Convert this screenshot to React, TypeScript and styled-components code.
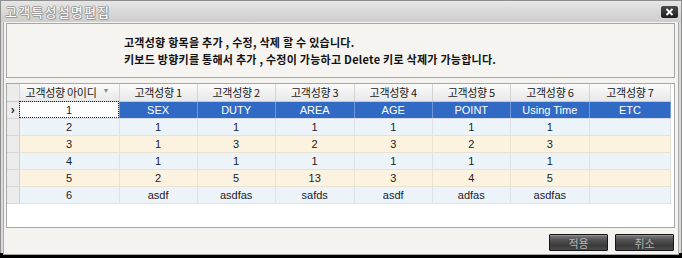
import React from "react";
import styled, { createGlobalStyle } from "styled-components";

const Global = createGlobalStyle`
  html, body { margin: 0; padding: 0; background: #000; }
  body { width: 682px; height: 258px; overflow: hidden; }
  * { box-sizing: border-box; }
`;

const KR = `"Noto Sans CJK KR", "Noto Sans", sans-serif`;
const LAT = `"Liberation Sans", "Noto Sans CJK KR", sans-serif`;

const Window = styled.div`
  width: 682px;
  height: 253px;
  display: flex;
  flex-direction: column;
  background: #d9d9d9;
  border: 1px solid #8e8e8e;
  border-bottom: none;
`;

const TitleBar = styled.div`
  height: 21px;
  flex: none;
  display: flex;
  align-items: center;
  justify-content: space-between;
  padding: 0 2px 0 4px;
  background: linear-gradient(#e6e6e6, #d6d6d6 60%, #cecece);
`;

const Title = styled.span`
  font-family: ${KR};
  font-size: 13px;
  font-weight: 400;
  color: #ffffff;
  letter-spacing: 1.2px;
  text-shadow: 1px 0 #9a9a9a, -1px 0 #9a9a9a, 0 1px #9a9a9a, 0 -1px #9a9a9a, 1px 1px #a8a8a8;
`;

const CloseButton = styled.div`
  width: 17px;
  height: 12px;
  border-radius: 2px;
  background: linear-gradient(#4a4a4a, #1e1e1e);
  display: flex;
  align-items: center;
  justify-content: center;
  margin-right: 1px;
`;

const Body = styled.div`
  flex: 1;
  margin: 0 2px;
  border-left: 1px solid #a9a9a9;
  border-right: 1px solid #a9a9a9;
  border-bottom: 1px solid #a9a9a9;
  background: #f4f3ef;
  padding: 1px 3px 3px 2px;
  display: flex;
  flex-direction: column;
`;

const InfoPanel = styled.div`
  height: 55px;
  flex: none;
  border: 1px solid #a6a6a6;
  background: #f5f4f1;
  padding: 10px 0 0 117px;
  display: flex;
  flex-direction: column;
`;

const InfoLine = styled.div`
  font-family: ${KR};
  font-size: 11px;
  font-weight: 700;
  color: #111;
  line-height: 17px;
  white-space: nowrap;
  letter-spacing: 0.25px;
`;

const GridPanel = styled.div`
  margin-top: 5px;
  height: 145px;
  flex: none;
  border: 1px solid #a6a6a6;
  background: #ffffff;
`;

const Table = styled.table`
  border-collapse: collapse;
  table-layout: fixed;
  width: 664px;
`;

const Col = styled.col<{ $w: number }>`
  width: ${(p) => p.$w}px;
`;

const HeadCell = styled.th<{ $corner?: boolean; $sort?: boolean }>`
  height: 17px;
  padding: 0 ${(p) => (p.$sort ? "16px" : "0")} 0 0;
  font-family: ${KR};
  font-size: 11px;
  font-weight: 400;
  letter-spacing: -0.3px;
  color: #1a1a1a;
  text-align: center;
  background: ${(p) => (p.$corner ? "#ececec" : "linear-gradient(#fbfbfb, #f0f0f0 55%, #e8e8e8)")};
  border-right: 1px solid #d4d4d4;
  border-bottom: 1px solid #c9c9c9;
  white-space: nowrap;
  position: relative;
`;

const SortGlyph = styled.span`
  position: absolute;
  left: 83px;
  top: 3px;
  font-size: 7px;
  color: #8a8a8a;
  font-family: ${LAT};
`;

const RowHead = styled.td`
  height: 17px;
  padding: 0;
  background: #ececec;
  border-right: 1px solid #d0d0d0;
  border-bottom: 1px solid #d6d6d6;
  text-align: center;
  font-family: ${LAT};
  font-size: 12px;
  font-weight: 700;
  color: #333;
  line-height: 14px;
`;

type Tone = "sel" | "blue" | "cream";

const bg: Record<Tone, string> = { sel: "#316ac5", blue: "#ecf4fa", cream: "#fbf2e0" };
const line: Record<Tone, string> = { sel: "#6f96d6", blue: "#dfe3e6", cream: "#e9e2d3" };

const Cell = styled.td<{ $tone: Tone; $focus?: boolean }>`
  height: 17px;
  padding: 0;
  text-align: center;
  font-family: ${LAT};
  font-size: 11px;
  line-height: 14px;
  white-space: nowrap;
  overflow: hidden;
  color: ${(p) => (p.$tone === "sel" && !p.$focus ? "#ffffff" : "#1b1b2a")};
  background: ${(p) => (p.$focus ? "#ffffff" : bg[p.$tone])};
  border-right: 1px solid ${(p) => line[p.$tone]};
  border-bottom: 1px solid ${(p) => (p.$tone === "sel" ? "#d8dde4" : line[p.$tone])};
  outline: ${(p) => (p.$focus ? "1px dotted #222" : "none")};
  outline-offset: -1px;
`;

const Footer = styled.div`
  flex: none;
  display: flex;
  justify-content: flex-end;
  gap: 7px;
  padding: 6px 0 0 0;
  margin-right: 1px;
`;

const DarkButton = styled.div`
  width: 59px;
  height: 17px;
  border: 1px solid #161616;
  border-radius: 1px;
  background: linear-gradient(#7c7c7c, #505050 35%, #3a3a3a 70%, #4a4a4a);
  display: flex;
  align-items: center;
  justify-content: center;
  font-family: ${KR};
  font-size: 11px;
  color: #b4b4b4;
  box-shadow: inset 0 1px 0 rgba(255, 255, 255, 0.2);
`;

const columns = [
  { w: 100, t: "고객성향 아이디" },
  { w: 78, t: "고객성향 1" },
  { w: 78, t: "고객성향 2" },
  { w: 79, t: "고객성향 3" },
  { w: 78, t: "고객성향 4" },
  { w: 78, t: "고객성향 5" },
  { w: 79, t: "고객성향 6" },
  { w: 81, t: "고객성향 7" },
];

const rows: string[][] = [
  ["1", "SEX", "DUTY", "AREA", "AGE", "POINT", "Using Time", "ETC"],
  ["2", "1", "1", "1", "1", "1", "1", ""],
  ["3", "1", "3", "2", "3", "2", "3", ""],
  ["4", "1", "1", "1", "1", "1", "1", ""],
  ["5", "2", "5", "13", "3", "4", "5", ""],
  ["6", "asdf", "asdfas", "safds", "asdf", "adfas", "asdfas", ""],
];

export default function App() {
  return (
    <>
      <Global />
      <Window>
        <TitleBar>
          <Title>고객특성설명편집</Title>
          <CloseButton>
            <svg width="9" height="8" viewBox="0 0 9 8">
              <path d="M1.5 1 L7.5 7 M7.5 1 L1.5 7" stroke="#fff" strokeWidth="1.8" />
            </svg>
          </CloseButton>
        </TitleBar>
        <Body>
          <InfoPanel>
            <InfoLine>고객성향 항목을 추가 , 수정, 삭제 할 수 있습니다.</InfoLine>
            <InfoLine>키보드 방향키를 통해서 추가 , 수정이 가능하고 Delete 키로 삭제가 가능합니다.</InfoLine>
          </InfoPanel>
          <GridPanel>
            <Table>
              <colgroup>
                <Col $w={12} />
                {columns.map((c, i) => (
                  <Col key={i} $w={c.w} />
                ))}
              </colgroup>
              <thead>
                <tr>
                  <HeadCell $corner />
                  {columns.map((c, i) => (
                    <HeadCell key={i} $sort={i === 0}>
                      {c.t}
                      {i === 0 && <SortGlyph>▼</SortGlyph>}
                    </HeadCell>
                  ))}
                </tr>
              </thead>
              <tbody>
                {rows.map((r, ri) => {
                  const tone: Tone = ri === 0 ? "sel" : ri % 2 === 1 ? "blue" : "cream";
                  return (
                    <tr key={ri}>
                      <RowHead>{ri === 0 ? "›" : ""}</RowHead>
                      {r.map((v, ci) => (
                        <Cell key={ci} $tone={tone} $focus={ri === 0 && ci === 0}>
                          {v}
                        </Cell>
                      ))}
                    </tr>
                  );
                })}
              </tbody>
            </Table>
          </GridPanel>
          <Footer>
            <DarkButton>적용</DarkButton>
            <DarkButton>취소</DarkButton>
          </Footer>
        </Body>
      </Window>
    </>
  );
}
